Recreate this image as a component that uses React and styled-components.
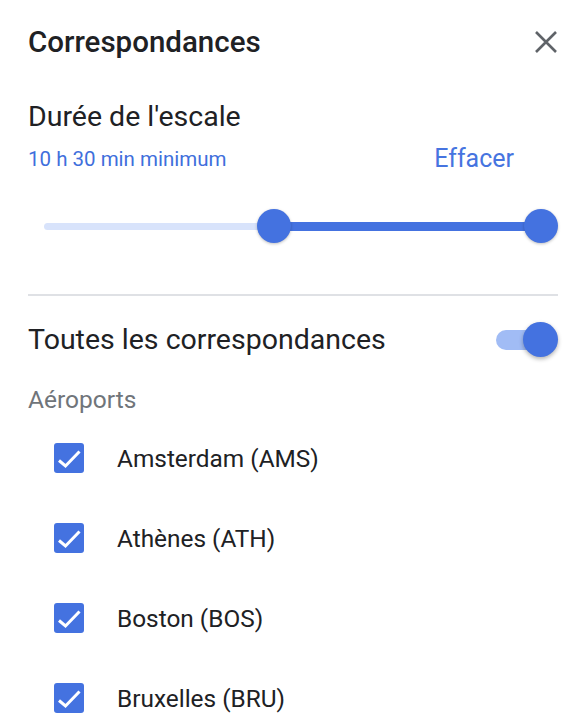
import React from 'react';
import styled, { createGlobalStyle } from 'styled-components';

const GlobalStyle = createGlobalStyle`
  body {
    margin: 0;
    background: #fff;
    font-family: Roboto, "Liberation Sans", sans-serif;
    color: #202124;
  }
`;

const Panel = styled.div`
  width: 570px;
  height: 726px;
  overflow: hidden;
  box-sizing: border-box;
  padding: 0 12px 0 28px;
`;

const Header = styled.div`
  display: flex;
  align-items: center;
  justify-content: space-between;
  height: 84px;
`;

const Title = styled.h1`
  margin: 0;
  font-size: 29.5px;
  font-weight: 500;
  line-height: 36px;
  color: #202124;
`;

const CloseButton = styled.button`
  border: 0;
  background: none;
  padding: 0;
  width: 24px;
  height: 24px;
  display: flex;
  align-items: center;
  justify-content: center;
  cursor: pointer;
`;

const SectionTitle = styled.h2`
  margin: 16px 0 0 0;
  font-size: 28.5px;
  font-weight: 400;
  line-height: 34px;
  color: #202124;
`;

const InfoRow = styled.div`
  display: flex;
  align-items: center;
  justify-content: space-between;
  padding-right: 44px;
  margin-top: 10px;
  height: 30px;
`;

const RangeText = styled.span`
  font-size: 20.5px;
  line-height: 30px;
  color: #3f6fdc;
`;

const ClearLink = styled.span`
  font-size: 25px;
  font-weight: 400;
  line-height: 30px;
  color: #4674e0;
  cursor: pointer;
`;

const SliderWrap = styled.div`
  position: relative;
  height: 34px;
  margin: 35px 0 0 16px;
  width: 497px;
`;

const Track = styled.div`
  position: absolute;
  left: 0;
  right: 0;
  top: 14px;
  height: 7px;
  border-radius: 4px;
  background: #d8e3fb;
`;

const ActiveTrack = styled.div`
  position: absolute;
  right: 0;
  top: 13px;
  height: 9px;
  background: #4472e0;
`;

const Thumb = styled.div`
  position: absolute;
  top: 0;
  width: 34px;
  height: 34px;
  margin-left: -17px;
  border-radius: 50%;
  background: #4472e0;
  box-shadow: 0 1px 3px rgba(0, 0, 0, 0.25);
`;

const Divider = styled.hr`
  border: 0;
  border-top: 2px solid #dfe1e5;
  margin: 51px 0 0 0;
`;

const ToggleRow = styled.div`
  display: flex;
  align-items: center;
  justify-content: space-between;
  margin-top: 26px;
  height: 36px;
`;

const ToggleLabel = styled.span`
  font-size: 28.5px;
  line-height: 36px;
  color: #202124;
`;

const Switch = styled.div`
  position: relative;
  width: 62px;
  height: 36px;
`;

const SwitchTrack = styled.div`
  position: absolute;
  left: 0;
  right: 12px;
  top: 8px;
  height: 20px;
  border-radius: 10px;
  background: #a1bcf5;
`;

const SwitchThumb = styled.div`
  position: absolute;
  right: 0;
  top: 0;
  width: 35px;
  height: 35px;
  border-radius: 50%;
  background: #4472e0;
  box-shadow: 0 2px 4px rgba(0, 0, 0, 0.3);
`;

const GroupLabel = styled.div`
  margin-top: 27px;
  font-size: 24.5px;
  line-height: 30px;
  color: #70757a;
`;

const List = styled.div`
  display: flex;
  flex-direction: column;
  margin-top: 3px;
  padding-left: 26px;
`;

const Item = styled.label`
  display: flex;
  align-items: center;
  height: 80px;
  gap: 33px;
  font-size: 24.4px;
  color: #202124;
`;

const Box = styled.span`
  width: 30px;
  height: 30px;
  border-radius: 3px;
  background: #4472e0;
  display: flex;
  align-items: center;
  justify-content: center;
  flex-shrink: 0;
`;

const airports = ['Amsterdam (AMS)', 'Athènes (ATH)', 'Boston (BOS)', 'Bruxelles (BRU)'];

const App = () => {
  const minPos = 230;
  return (
    <Panel>
      <GlobalStyle />
      <Header>
        <Title>Correspondances</Title>
        <CloseButton aria-label="Fermer">
          <svg width="24" height="24" viewBox="0 0 24 24">
            <path d="M2 2 L22 22 M22 2 L2 22" stroke="#5f6368" strokeWidth="2.6" />
          </svg>
        </CloseButton>
      </Header>
      <SectionTitle>Durée de l'escale</SectionTitle>
      <InfoRow>
        <RangeText>10 h 30 min minimum</RangeText>
        <ClearLink>Effacer</ClearLink>
      </InfoRow>
      <SliderWrap>
        <Track />
        <ActiveTrack style={{ left: minPos }} />
        <Thumb style={{ left: minPos }} />
        <Thumb style={{ left: 497 }} />
      </SliderWrap>
      <Divider />
      <ToggleRow>
        <ToggleLabel>Toutes les correspondances</ToggleLabel>
        <Switch>
          <SwitchTrack />
          <SwitchThumb />
        </Switch>
      </ToggleRow>
      <GroupLabel>Aéroports</GroupLabel>
      <List>
        {airports.map((name) => (
          <Item key={name}>
            <Box>
              <svg width="30" height="30" viewBox="0 0 30 30">
                <path d="M5 17.5 L11.5 23 L25.5 8.5" fill="none" stroke="#fff" strokeWidth="3" />
              </svg>
            </Box>
            {name}
          </Item>
        ))}
      </List>
    </Panel>
  );
};

export default App;
